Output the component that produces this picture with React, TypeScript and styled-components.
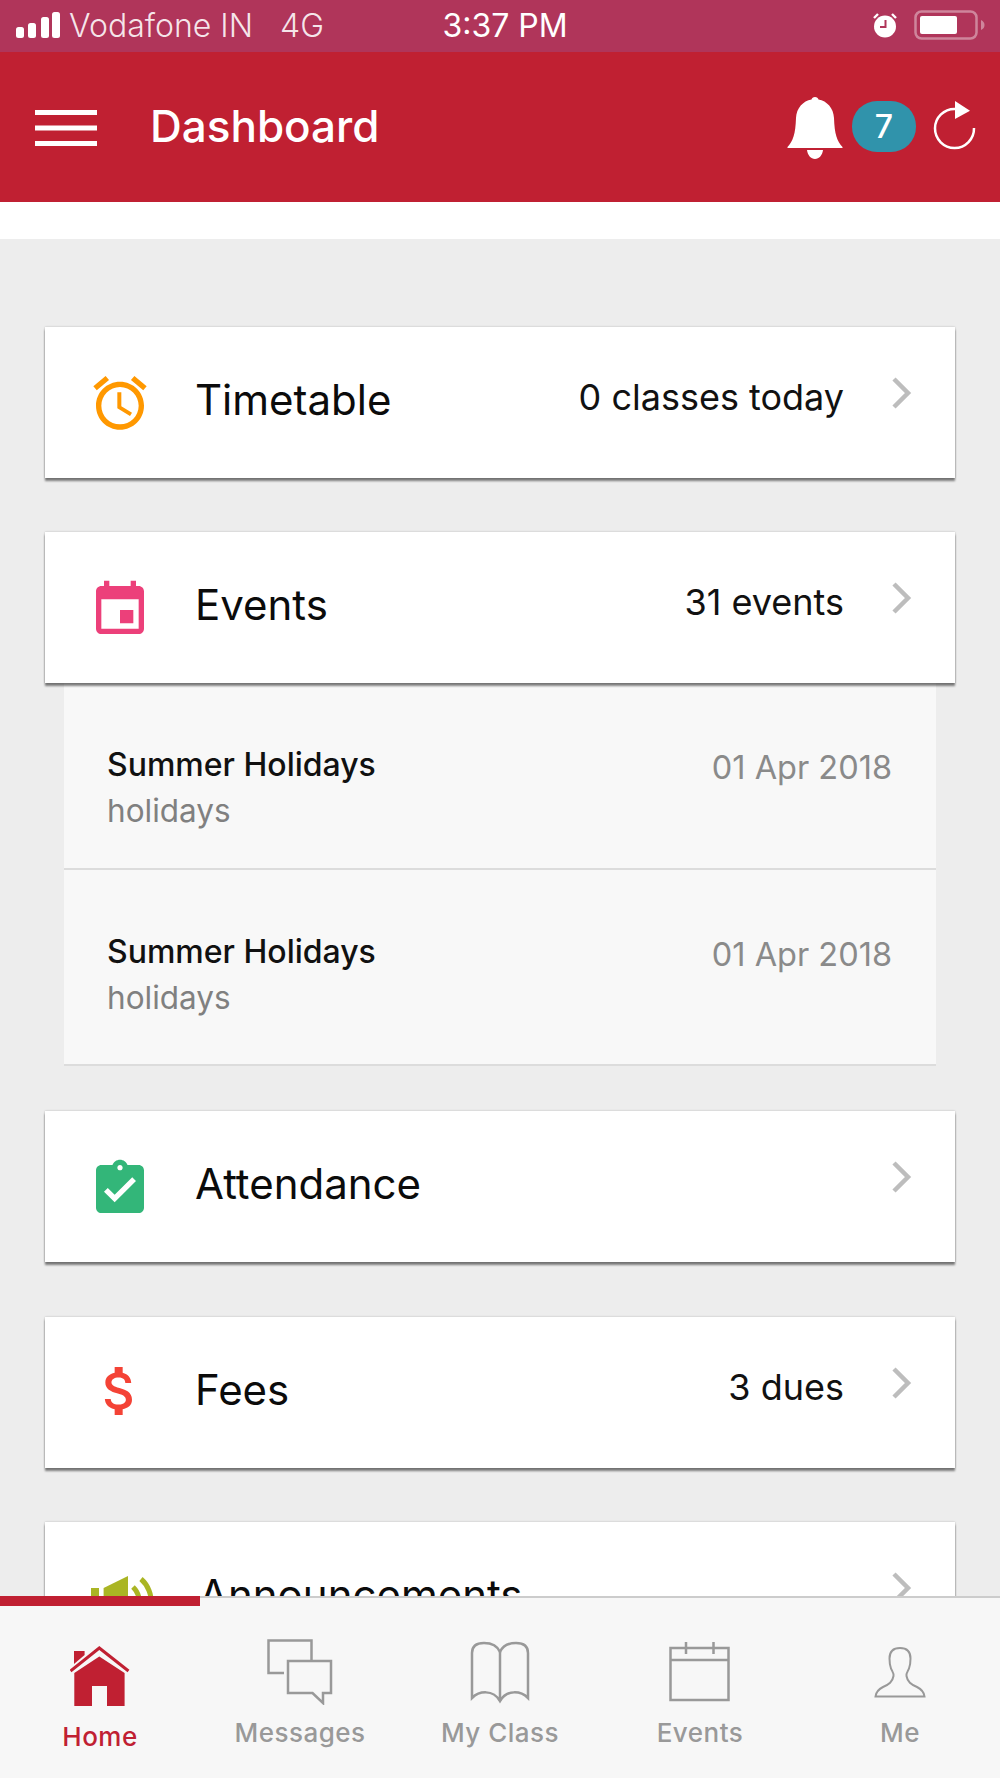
import React from "react";
import styled, { createGlobalStyle } from "styled-components";

const RED = "#c02032";
const GREY = "#999999";

const GlobalStyle = createGlobalStyle`
  html, body {
    margin: 0;
    padding: 0;
    background: #ededed;
  }
  * {
    box-sizing: border-box;
  }
`;

const Page = styled.div`
  display: flex;
  flex-direction: column;
  width: 1000px;
  height: 1778px;
  overflow: hidden;
  font-family: Inter, Roboto, "Liberation Sans", sans-serif;
`;

const StatusBar = styled.div`
  display: grid;
  grid-template-columns: 1fr auto 1fr;
  align-items: center;
  flex: 0 0 52px;
  padding: 0 15px 2px 16px;
  background: #b0355a;
  color: #fff;
  font-size: 32px;
`;

const StatusLeft = styled.div`
  display: flex;
  align-items: center;
  color: rgba(255, 255, 255, 0.88);
`;

const Carrier = styled.span`
  margin-left: 8px;
  font-weight: 300;
`;

const Network = styled.span`
  margin-left: 27px;
  font-weight: 300;
`;

const Clock = styled.span`
  padding-left: 9px;
  font-weight: 400;
`;

const StatusRight = styled.div`
  display: flex;
  align-items: center;
  justify-content: flex-end;
  gap: 15px;
`;

const Header = styled.header`
  display: flex;
  align-items: center;
  flex: 0 0 150px;
  padding: 2px 23px 0 35px;
  background: ${RED};
  color: #fff;
`;

const HeaderTitle = styled.h1`
  flex: 1;
  margin: 0 0 4px 53px;
  font-size: 44px;
  font-weight: 500;
`;

const Badge = styled.span`
  display: flex;
  align-items: center;
  justify-content: center;
  width: 64px;
  height: 51px;
  margin: 0 17px 4px 9px;
  border-radius: 25px;
  background: #3093ab;
  font-size: 32px;
  font-weight: 500;
`;

const RefreshSvg = styled.svg`
  width: 44px;
  height: 50px;
  margin-bottom: 6px;
`;

const WhiteStrip = styled.div`
  flex: 0 0 37px;
  background: #fff;
`;

const Content = styled.main`
  flex: 1;
  min-height: 0;
  overflow: hidden;
  padding: 88px 45px 0;
  background: #ededed;
`;

const Section = styled.section<{ $gap: number }>`
  margin-bottom: ${(p) => p.$gap}px;
`;

const Card = styled.div`
  position: relative;
  z-index: 1;
  display: flex;
  align-items: flex-start;
  height: 151px;
  padding: 0 42px 0 43px;
  background: #fff;
  box-shadow: 0 0 2px rgba(0, 0, 0, 0.22), 0 3px 2px rgba(0, 0, 0, 0.48);
`;

const IconSlot = styled.span<{ $top: number }>`
  display: block;
  flex: 0 0 64px;
  height: 64px;
  margin-top: ${(p) => p.$top}px;
`;

const CardTitle = styled.span`
  flex: 1;
  margin: 48px 0 0 43px;
  color: #0b0b0b;
  font-size: 42px;
  line-height: 50px;
`;

const CardValue = styled.span`
  margin: 45px 47px 0 0;
  color: #111;
  font-size: 36px;
  line-height: 50px;
`;

const Chevron = styled.svg`
  flex: 0 0 22px;
  width: 22px;
  height: 34px;
  margin-top: 49px;
`;

const SubList = styled.div`
  margin: 0 19px;
  background: #f8f8f8;
`;

const SubRow = styled.div<{ $extra: number }>`
  display: flex;
  justify-content: space-between;
  padding: 62px 44px ${(p) => 37 + p.$extra}px 43px;
  border-bottom: 2px solid #dcdcdc;
`;

const SubTitle = styled.div`
  color: #111;
  font-size: 32px;
  font-weight: 500;
  line-height: 40px;
`;

const SubKind = styled.div`
  margin-top: 6px;
  color: #808080;
  font-size: 31.5px;
  line-height: 40px;
`;

const SubDate = styled.div`
  margin-top: 3px;
  color: #8a8a8a;
  font-size: 32.5px;
  line-height: 40px;
`;

const TabBar = styled.nav`
  position: relative;
  z-index: 2;
  display: grid;
  grid-template-columns: repeat(5, 1fr);
  flex: 0 0 182px;
  background: #f7f7f7;
  border-top: 2px solid #cccccc;
`;

const Tab = styled.div<{ $active?: boolean }>`
  position: relative;
  display: flex;
  flex-direction: column;
  align-items: center;
  color: ${(p) => (p.$active ? RED : GREY)};

  ${(p) =>
    p.$active &&
    `
    &::before {
      content: "";
      position: absolute;
      top: -2px;
      left: 0;
      right: 0;
      height: 10px;
      background: ${RED};
    }
  `}
`;

const TabIcon = styled.span<{ $top: number }>`
  display: flex;
  justify-content: center;
  height: 108px;
  padding-top: ${(p) => p.$top}px;
`;

const TabLabel = styled.span<{ $active?: boolean }>`
  margin-top: ${(p) => (p.$active ? 14 : 10)}px;
  font-size: 26px;
  font-weight: 500;
  letter-spacing: 0.5px;
  line-height: 34px;
`;

const Signal = () => (
  <svg width="45" height="28" viewBox="0 0 45 28" fill="#fff">
    <rect x="0" y="16" width="8" height="11" rx="2.5" />
    <rect x="12" y="12" width="8" height="15" rx="2.5" />
    <rect x="25" y="6" width="8" height="21" rx="2.5" />
    <rect x="36" y="1" width="8" height="26" rx="2.5" />
  </svg>
);

const SmallAlarm = () => (
  <svg width="28" height="26" viewBox="0 0 28 26">
    <circle cx="14" cy="14.5" r="11" fill="#fff" />
    <path d="M3 6l4-4M25 6l-4-4" stroke="#fff" strokeWidth="2.4" />
    <path d="M14.5 8v7H9" fill="none" stroke="#b0355a" strokeWidth="2" />
  </svg>
);

const Battery = () => (
  <svg width="71" height="30" viewBox="0 0 71 30">
    <rect x="1.5" y="1.5" width="61" height="27" rx="6" fill="none" stroke="rgba(255,255,255,0.4)" strokeWidth="2.5" />
    <rect x="6" y="6" width="37" height="18" rx="2" fill="#fff" />
    <path d="M67 10c2.5 1 3.5 3 3.5 5s-1 4-3.5 5z" fill="rgba(255,255,255,0.4)" />
  </svg>
);

const Hamburger = () => (
  <svg width="62" height="37" viewBox="0 0 62 37" fill="#fff">
    <rect x="0" y="0" width="62" height="5" />
    <rect x="0" y="15.5" width="62" height="5" />
    <rect x="0" y="31" width="62" height="5" />
  </svg>
);

const Bell = () => (
  <svg width="56" height="64" viewBox="0 0 56 64" fill="#fff">
    <path d="M28 1c2 0 3 1 3.500 2.500C40 5 46.500 12 47 22c.5 16 3 23 8.500 29v1H.5v-1C6 45 8.500 38 9 22 9.500 12 16 5 24.500 3.500 25 2 26 1 28 1zM20 54h16c-.5 5-4 9-8 9s-7.500-4-8-9z" />
  </svg>
);

const Refresh = () => (
  <RefreshSvg viewBox="0 0 44 50" fill="none">
    <path d="M22 9A19.500 19.500 0 1 0 41 28" stroke="#fff" strokeWidth="2.500" />
    <path d="M22 1l15 9.700L22 19z" fill="#fff" />
  </RefreshSvg>
);

const RightChevron = () => (
  <Chevron viewBox="0 0 22 34" fill="none">
    <path d="M3 3l14 14L3 31" stroke="#bdbdbd" strokeWidth="4.500" />
  </Chevron>
);

const MaterialIcon = ({ d, color }: { d: string; color: string }) => (
  <svg width="64" height="64" viewBox="0 0 24 24" fill={color}>
    <path d={d} />
  </svg>
);

const AlarmIcon = () => (
  <MaterialIcon
    color="#ff9800"
    d="M22 5.720l-4.600-3.860-1.290 1.530 4.600 3.860L22 5.720zM7.880 3.390L6.600 1.860 2 5.710l1.290 1.530 4.590-3.850zM12.500 8H11v6l4.750 2.850.75-1.230-4-2.370V8zM12 4c-4.970 0-9 4.030-9 9s4.030 9 9 9 9-4.030 9-9-4.030-9-9-9zm0 16c-3.870 0-7-3.130-7-7s3.130-7 7-7 7 3.130 7 7-3.130 7-7 7z"
  />
);

const EventIcon = () => (
  <MaterialIcon
    color="#ec407a"
    d="M17 12h-5v5h5v-5zM16 1v2H8V1H6v2H5c-1.110 0-1.990.9-1.990 2L3 19c0 1.100.89 2 2 2h14c1.100 0 2-.9 2-2V5c0-1.100-.9-2-2-2h-1V1h-2zm3 18H5V8h14v11z"
  />
);

const AttendanceIcon = () => (
  <MaterialIcon
    color="#33b679"
    d="M19 3h-4.180C14.400 1.840 13.300 1 12 1c-1.300 0-2.400.84-2.820 2H5c-1.100 0-2 .9-2 2v14c0 1.100.9 2 2 2h14c1.100 0 2-.9 2-2V5c0-1.100-.9-2-2-2zm-7 0c.55 0 1 .45 1 1s-.45 1-1 1-1-.45-1-1 .45-1 1-1zm-2 14l-4-4 1.410-1.410L10 14.170l6.590-6.590L18 9l-8 8z"
  />
);

const FeesIcon = () => (
  <MaterialIcon
    color="#f44336"
    d="M11.800 10.900c-2.270-.59-3-1.200-3-2.150 0-1.090 1.010-1.850 2.700-1.850 1.780 0 2.440.85 2.500 2.100h2.210c-.07-1.720-1.120-3.300-3.210-3.810V3h-3v2.160c-1.940.42-3.500 1.680-3.500 3.610 0 2.310 1.910 3.460 4.700 4.130 2.500.6 3 1.480 3 2.410 0 .69-.49 1.790-2.700 1.790-2.060 0-2.870-.92-2.980-2.100h-2.200c.12 2.190 1.760 3.420 3.680 3.830V21h3v-2.150c1.950-.37 3.500-1.500 3.500-3.550 0-2.840-2.430-3.810-4.700-4.400z"
  />
);

const SpeakerIcon = () => (
  <svg width="68" height="64" viewBox="0 0 68 64" fill="#aab524">
    <rect x="3" y="18" width="8" height="46" />
    <path d="M15.600 18L40 6v58H15.600z" />
    <path d="M53 9c7 6 11 16 10 26M45 17c3 3 6 8 6 13" fill="none" stroke="#aab524" strokeWidth="5" />
  </svg>
);

const HomeIcon = () => (
  <svg width="60" height="62" viewBox="0 0 60 62" fill={RED}>
    <path d="M4 6h10.600v4L4 19z" />
    <path d="M.5 26L29.300 3l29.200 23" fill="none" stroke={RED} strokeWidth="3" />
    <path d="M4.300 61V28L29.300 11.500 54.600 28v33H37V41H22v20z" />
  </svg>
);

const MessagesIcon = () => (
  <svg width="66" height="66" viewBox="0 0 66 66" fill="none" stroke={GREY} strokeWidth="2.500">
    <path d="M17 34H1.500V1.500h43v20" />
    <path d="M21 22h43v32h-8v10L45.500 54H21z" />
  </svg>
);

const BookIcon = () => (
  <svg width="60" height="63" viewBox="0 0 60 63" fill="none" stroke={GREY} strokeWidth="2.500">
    <path d="M30 11C27 4 21 2 14 2 6 2 2 5 2 12v45c7-7 21-9 28 3 7-12 21-10 28-3V12c0-7-4-10-12-10-7 0-13 2-16 9z" />
    <path d="M30 11v49" />
  </svg>
);

const CalendarIcon = () => (
  <svg width="62" height="61" viewBox="0 0 62 61" fill="none" stroke={GREY} strokeWidth="2.500">
    <rect x="1.500" y="7" width="58" height="52" />
    <path d="M1.500 19h58" />
    <path d="M17 1v12M44.500 1v12" />
  </svg>
);

const PersonIcon = () => (
  <svg width="52" height="52" viewBox="0 0 52 52" fill="none" stroke={GREY} strokeWidth="2">
    <path d="M26 2c-7 0-10.500 4-10.500 10.500 0 4 .5 7.500 1.500 10 1 2.500 3 4.500 2.500 7.500-1 6-4.500 8.500-10.500 11-4 2-7 5-7.500 9.500h49C50 46 47 43 43 41c-6-2.500-9.500-5-10.500-11-.5-3 1.500-5 2.500-7.500s1.500-6 1.500-10C36.500 6 33 2 26 2z" />
  </svg>
);

const sections = [
  { title: "Timetable", value: "0 classes today", icon: <AlarmIcon />, top: 44, gap: 54 },
  { title: "Events", value: "31 events", icon: <EventIcon />, top: 46, gap: 0 },
];

const holidays = [
  { title: "Summer Holidays", kind: "holidays", date: "01 Apr 2018", extra: 0 },
  { title: "Summer Holidays", kind: "holidays", date: "01 Apr 2018", extra: 9 },
];

const lowerSections = [
  { title: "Attendance", value: "", icon: <AttendanceIcon />, top: 46, gap: 55 },
  { title: "Fees", value: "3 dues", icon: <FeesIcon />, top: 42, gap: 54 },
  { title: "Announcements", value: "", icon: <SpeakerIcon />, top: 48, gap: 0 },
];

const tabs = [
  { label: "Home", icon: <HomeIcon />, top: 47, active: true },
  { label: "Messages", icon: <MessagesIcon />, top: 41 },
  { label: "My Class", icon: <BookIcon />, top: 43 },
  { label: "Events", icon: <CalendarIcon />, top: 43 },
  { label: "Me", icon: <PersonIcon />, top: 48 },
];

type RowProps = { title: string; value: string; icon: React.ReactNode; top: number };

const SectionCard = ({ title, value, icon, top }: RowProps) => (
  <Card>
    <IconSlot $top={top}>{icon}</IconSlot>
    <CardTitle>{title}</CardTitle>
    {value && <CardValue>{value}</CardValue>}
    <RightChevron />
  </Card>
);

export default function App() {
  return (
    <Page>
      <GlobalStyle />
      <StatusBar>
        <StatusLeft>
          <Signal />
          <Carrier>Vodafone IN</Carrier>
          <Network>4G</Network>
        </StatusLeft>
        <Clock>3:37 PM</Clock>
        <StatusRight>
          <SmallAlarm />
          <Battery />
        </StatusRight>
      </StatusBar>

      <Header>
        <Hamburger />
        <HeaderTitle>Dashboard</HeaderTitle>
        <Bell />
        <Badge>7</Badge>
        <Refresh />
      </Header>
      <WhiteStrip />

      <Content>
        {sections.map((s) => (
          <Section key={s.title} $gap={s.gap}>
            <SectionCard {...s} />
          </Section>
        ))}
        <SubList>
          {holidays.map((h, i) => (
            <SubRow key={i} $extra={h.extra}>
              <div>
                <SubTitle>{h.title}</SubTitle>
                <SubKind>{h.kind}</SubKind>
              </div>
              <SubDate>{h.date}</SubDate>
            </SubRow>
          ))}
        </SubList>
        <Section $gap={45} />
        {lowerSections.map((s) => (
          <Section key={s.title} $gap={s.gap}>
            <SectionCard {...s} />
          </Section>
        ))}
      </Content>

      <TabBar>
        {tabs.map((t) => (
          <Tab key={t.label} $active={t.active}>
            <TabIcon $top={t.top}>{t.icon}</TabIcon>
            <TabLabel $active={t.active}>{t.label}</TabLabel>
          </Tab>
        ))}
      </TabBar>
    </Page>
  );
}
